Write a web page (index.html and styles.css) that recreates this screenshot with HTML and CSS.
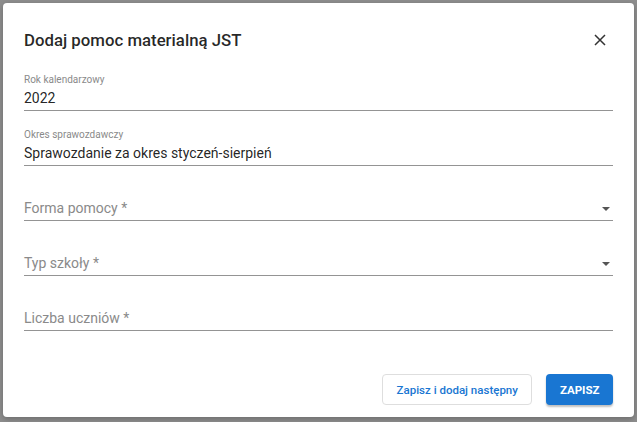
FILE: index.html
```html
<!DOCTYPE html>
<html lang="pl">
<head>
<meta charset="utf-8">
<title>Dodaj pomoc materialną JST</title>
<link rel="stylesheet" href="styles.css">
</head>
<body>
<div class="dialog">
  <div class="dialog-header">
    <h2 class="dialog-title">Dodaj pomoc materialną JST</h2>
    <button class="close-btn" aria-label="Zamknij">
      <svg width="12" height="12" viewBox="0 0 12 12"><path d="M1 1 L11 11 M11 1 L1 11" stroke="#333" stroke-width="1.5" fill="none"/></svg>
    </button>
  </div>
  <div class="dialog-form">
    <div class="field">
      <div class="field-label">Rok kalendarzowy</div>
      <div class="field-input">2022</div>
    </div>
    <div class="field">
      <div class="field-label">Okres sprawozdawczy</div>
      <div class="field-input">Sprawozdanie za okres styczeń-sierpień</div>
    </div>
    <div class="field">
      <div class="field-label"></div>
      <div class="field-input placeholder select">Forma pomocy *<span class="arrow"></span></div>
    </div>
    <div class="field">
      <div class="field-label"></div>
      <div class="field-input placeholder select">Typ szkoły *<span class="arrow"></span></div>
    </div>
    <div class="field">
      <div class="field-label"></div>
      <div class="field-input placeholder">Liczba uczniów *</div>
    </div>
  </div>
  <div class="dialog-actions">
    <button class="btn btn-outlined">Zapisz i dodaj następny</button>
    <button class="btn btn-primary">ZAPISZ</button>
  </div>
</div>
</body>
</html>
```
FILE: styles.css
```css
* { box-sizing: border-box; }
html, body { margin: 0; }
body {
  width: 637px;
  height: 422px;
  background: #8e8e8e;
  padding: 3px 3px 0 3px;
  font-family: Roboto, "Liberation Sans", sans-serif;
  overflow: hidden;
}
.dialog {
  width: 631px;
  height: 414px;
  background: #fff;
  border-radius: 4px;
  box-shadow: 0 2px 6px rgba(0,0,0,0.25);
  display: flex;
  flex-direction: column;
}
.dialog-header {
  display: flex;
  align-items: center;
  justify-content: space-between;
  padding: 21px 21px 0 21px;
  height: 53px;
}
.dialog-title {
  margin: 0;
  font-size: 16.8px;
  font-weight: 500;
  line-height: 32px;
  color: rgba(0,0,0,0.85);
}
.close-btn {
  width: 26px;
  height: 26px;
  border: 0;
  background: none;
  padding: 0;
  display: flex;
  align-items: center;
  justify-content: center;
}
.dialog-form {
  padding: 0 21px;
}
.field {
  height: 55px;
  padding-top: 18px;
  border-bottom: 1px solid #949494;
}
.field-label {
  height: 12px;
  font-size: 10px;
  line-height: 12px;
  color: #8a8a8a;
  margin-bottom: 2px;
}
.field-input {
  height: 20px;
  font-size: 14px;
  line-height: 20px;
  color: rgba(0,0,0,0.87);
  display: flex;
  align-items: center;
}
.field-input.placeholder {
  color: #8a8a8a;
}
.field-input.select {
  justify-content: space-between;
}
.arrow {
  width: 0;
  height: 0;
  border-left: 4.5px solid transparent;
  border-right: 4.5px solid transparent;
  border-top: 4.5px solid #555;
  margin-right: 3px;
  margin-top: 1px;
}
.dialog-actions {
  margin-top: auto;
  display: flex;
  justify-content: flex-end;
  gap: 14px;
  padding: 0 21px 12px;
}
.btn {
  height: 31px;
  border-radius: 4px;
  font-family: Roboto, "Liberation Sans", sans-serif;
  font-size: 11.5px;
  font-weight: 500;
  padding: 0 13.5px;
  cursor: pointer;
}
.btn-outlined {
  background: #fff;
  color: #1976d2;
  border: 1px solid #dedede;
}
.btn-primary {
  background: #1976d2;
  color: #fff;
  border: 0;
  font-weight: 700;
  box-shadow: 0 2px 2px rgba(0,0,0,0.25);
}
```
